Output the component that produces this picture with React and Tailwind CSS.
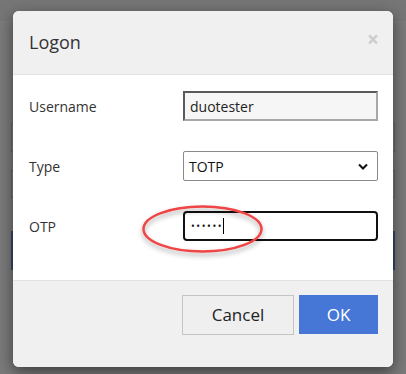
import React from 'react';

export default function App() {
  return (
    <div className="relative w-[406px] h-[374px] overflow-hidden bg-[#f4f4f4] font-['Open_Sans',sans-serif]">
      {/* page behind the modal */}
      <div className="h-[22px] bg-[#ececec] border-b border-[#fafafa]" />
      <div className="px-[11px] pt-[101px] flex flex-col">
        <div className="h-[29px] border border-[#cfcfcf] bg-white" />
        <div className="h-[28px] mt-[18px] border border-[#cfcfcf] bg-white" />
        <div className="h-[39px] mt-[33px] bg-[#6e8ed0]" />
      </div>

      {/* overlay */}
      <div className="absolute inset-0 bg-black/50" />

      {/* modal */}
      <div className="absolute left-[13px] top-[11px] w-[380px] h-[356px] rounded-[6px] overflow-hidden bg-white shadow-[0_5px_15px_rgba(0,0,0,0.5)] flex flex-col">
        <div className="h-[64px] shrink-0 bg-[#f0f0f0] border-b border-[#e2e2e2] flex items-center justify-between pl-[16px] pr-[14px]">
          <span className="text-[18px] text-[#333]">Logon</span>
          <span className="text-[21px] font-bold leading-none text-[#cdcdcd] -mt-[7px]">×</span>
        </div>

        <div className="pt-[16px] pb-[39px] pl-[16px] pr-[15px] flex flex-col gap-[30px] text-[14px] text-[#333]">
          <div className="h-[30px] flex items-center">
            <span className="w-[154px]">Username</span>
            <div className="flex-1 h-full border-2 border-t-[#5a5a5a] border-l-[#5a5a5a] border-b-[#a8a8a8] border-r-[#a8a8a8] bg-[#f6f6f6] flex items-center px-[5px] text-[#222]">
              duotester
            </div>
          </div>
          <div className="h-[30px] flex items-center">
            <span className="w-[154px]">Type</span>
            <div className="flex-1 h-full border border-[#8a8a8a] rounded-[2px] bg-white flex items-center justify-between pl-[5px] pr-[9px] text-[#111]">
              <span>TOTP</span>
              <svg width="10" height="7" viewBox="0 0 10 7">
                <path d="M1 1.5 L5 5.5 L9 1.5" fill="none" stroke="#111" strokeWidth="2" />
              </svg>
            </div>
          </div>
          <div className="h-[30px] flex items-center">
            <span className="w-[154px]">OTP</span>
            <div className="flex-1 h-full border-2 border-[#111] rounded-[4px] bg-white flex items-center pl-[6px] text-[#111]">
              <span className="text-[10px] tracking-[1.6px] leading-none">••••••</span>
              <span className="w-px h-[16px] bg-black" />
            </div>
          </div>
        </div>

        <div className="flex-1 bg-[#f0f0f0] border-t border-[#e2e2e2] flex justify-end items-start gap-[5px] pt-[14px] pr-[15px]">
          <button className="w-[112px] h-[40px] border border-[#c4c4c4] bg-[#efefef] text-[17px] text-[#222]">Cancel</button>
          <button className="w-[79px] h-[39px] bg-[#4677d7] text-[17px] text-white">OK</button>
        </div>
      </div>

      {/* red highlight ring */}
      <svg className="absolute left-[136px] top-[200px]" width="134" height="62" viewBox="0 0 134 62">
        <defs>
          <filter id="sh" x="-20%" y="-30%" width="140%" height="170%">
            <feDropShadow dx="0" dy="3" stdDeviation="2.5" floodColor="#000" floodOpacity="0.35" />
          </filter>
        </defs>
        <ellipse cx="66.5" cy="29" rx="59" ry="22.5" fill="none" stroke="#ef4444" strokeWidth="2.5" filter="url(#sh)" />
      </svg>
    </div>
  );
}
